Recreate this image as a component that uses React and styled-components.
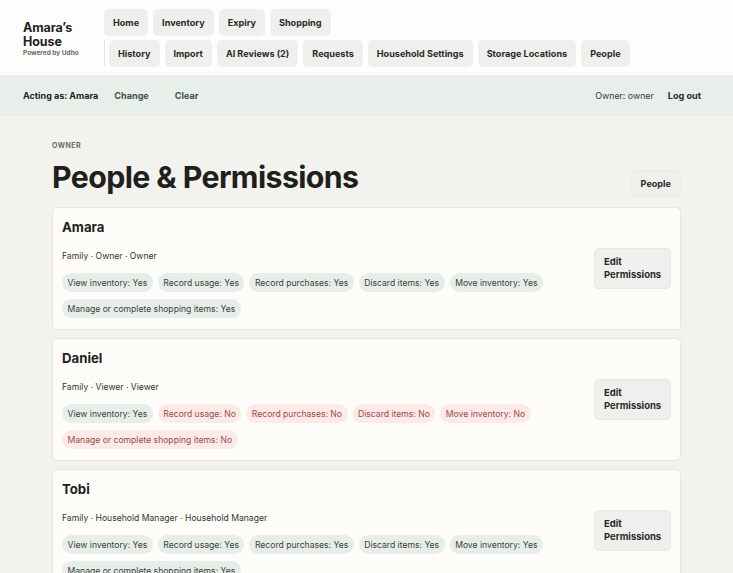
import React from 'react';
import styled, { createGlobalStyle } from 'styled-components';

const GlobalStyle = createGlobalStyle`
	* { box-sizing: border-box; }
	body {
		margin: 0;
		background: #f4f2ee;
		font-family: Inter, 'Noto Sans', sans-serif;
		color: #1f1f1d;
	}
`;

const Header = styled.header`
	background: #fdfdfb;
	display: flex;
	align-items: center;
	gap: 11px;
	padding: 9px 23px 8px;
`;

const Brand = styled.div`
	width: 70px;
	flex-shrink: 0;
	margin-top: 2px;
`;

const BrandName = styled.div`
	font-size: 12.5px;
	font-weight: 700;
	line-height: 13.5px;
	letter-spacing: -0.1px;
`;

const BrandTag = styled.div`
	font-size: 6.5px;
	font-weight: 700;
	color: #6b6b66;
	margin-top: 1px;
`;

const Nav = styled.nav`
	display: flex;
	flex-wrap: wrap;
	gap: 4px 5px;
`;

const NavGroup = styled.div`
	display: flex;
	gap: 5px;
	${p => p.split && `
		border-left: 1px solid #e4e4df;
		padding-left: 4px;
	`}
`;

const NavButton = styled.button`
	height: 27px;
	padding: 0 9px;
	border: none;
	border-radius: 5px;
	background: #eff0ed;
	font-family: inherit;
	font-size: 9.1px;
	font-weight: 700;
	color: #2a2a28;
`;

const SubBar = styled.div`
	background: #e8eee9;
	height: 41px;
	display: flex;
	align-items: center;
	justify-content: space-between;
	padding: 0 22px 0 23px;
	font-size: 8.8px;
`;

const BarGroup = styled.div`
	display: flex;
	align-items: center;
	gap: ${p => p.gap || 0}px;
`;

const Acting = styled.span`
	font-size: 9px;
	font-weight: 700;
`;

const OwnerNote = styled.span`
	color: #3b3b38;
`;

const LinkButton = styled.button`
	background: none;
	border: none;
	padding: 4px 10px;
	font-family: inherit;
	font-size: 9.1px;
	font-weight: 700;
	color: ${p => (p.muted ? '#3d5646' : '#2a2a28')};
`;

const Main = styled.main`
	padding: 25px 52px 0;
`;

const Eyebrow = styled.div`
	font-size: 7px;
	font-weight: 700;
	letter-spacing: 0.5px;
	color: #6b6b66;
	text-transform: uppercase;
`;

const TitleRow = styled.div`
	display: flex;
	justify-content: space-between;
	align-items: flex-end;
	margin-top: 8px;
	margin-bottom: 11px;
`;

const Title = styled.h1`
	margin: 0;
	font-size: 30.3px;
	font-weight: 700;
	letter-spacing: -0.6px;
	line-height: 38px;
`;

const GhostButton = styled.button`
	height: 27px;
	padding: 0 9px;
	border: 1px solid #ecebe6;
	border-radius: 5px;
	background: #eff0ed;
	font-family: inherit;
	font-size: 9.1px;
	font-weight: 700;
	color: #2a2a28;
	margin-bottom: -1px;
`;

const List = styled.div`
	display: flex;
	flex-direction: column;
	gap: 8px;
`;

const Card = styled.section`
	background: #fdfcf9;
	border: 1px solid #e7e5df;
	border-radius: 5px;
	padding: 10px 9px 11px;
	display: flex;
	align-items: center;
	gap: 12px;
`;

const CardBody = styled.div`
	flex: 1;
`;

const Name = styled.h2`
	margin: 0;
	font-size: 13.2px;
	font-weight: 700;
	line-height: 18px;
`;

const Meta = styled.div`
	font-size: 8.6px;
	color: #34342f;
	margin: 15px 0 12px;
`;

const Chips = styled.div`
	display: flex;
	flex-wrap: wrap;
	gap: 7px 5px;
`;

const Chip = styled.span`
	display: inline-flex;
	align-items: center;
	height: 19px;
	padding: 0 5.5px;
	border-radius: 10px;
	font-size: 8.6px;
	background: ${p => (p.on ? '#e7eee9' : '#fbeae7')};
	color: ${p => (p.on ? '#3a3e3a' : '#a0494a')};
`;

const EditButton = styled.button`
	width: 77px;
	height: 41px;
	flex-shrink: 0;
	padding: 0 9px;
	border: 1px solid #e8e9e5;
	border-radius: 5px;
	background: #eff0ed;
	font-family: inherit;
	font-size: 9.5px;
	font-weight: 700;
	line-height: 13.5px;
	text-align: left;
	color: #2a2a28;
`;

const permissionLabels = [
	'View inventory',
	'Record usage',
	'Record purchases',
	'Discard items',
	'Move inventory',
	'Manage or complete shopping items',
];

const people = [
	{ name: 'Amara', meta: 'Family · Owner · Owner', perms: [1, 1, 1, 1, 1, 1] },
	{ name: 'Daniel', meta: 'Family · Viewer · Viewer', perms: [1, 0, 0, 0, 0, 0] },
	{ name: 'Tobi', meta: 'Family · Household Manager · Household Manager', perms: [1, 1, 1, 1, 1, 1] },
];

const topNav = ['Home', 'Inventory', 'Expiry', 'Shopping'];
const moreNav = ['History', 'Import', 'AI Reviews (2)', 'Requests', 'Household Settings', 'Storage Locations', 'People'];

const App = () => (
	<>
		<GlobalStyle />
		<Header>
			<Brand>
				<BrandName>Amara’s House</BrandName>
				<BrandTag>Powered by Udho</BrandTag>
			</Brand>
			<Nav>
				<NavGroup>
					{topNav.map(item => <NavButton key={item}>{item}</NavButton>)}
				</NavGroup>
				<NavGroup split>
					{moreNav.map(item => <NavButton key={item}>{item}</NavButton>)}
				</NavGroup>
			</Nav>
		</Header>
		<SubBar>
			<BarGroup gap={6}>
				<Acting>Acting as: Amara</Acting>
				<LinkButton muted>Change</LinkButton>
				<LinkButton muted>Clear</LinkButton>
			</BarGroup>
			<BarGroup gap={4}>
				<OwnerNote>Owner: owner</OwnerNote>
				<LinkButton>Log out</LinkButton>
			</BarGroup>
		</SubBar>
		<Main>
			<Eyebrow>Owner</Eyebrow>
			<TitleRow>
				<Title>People &amp; Permissions</Title>
				<GhostButton>People</GhostButton>
			</TitleRow>
			<List>
				{people.map(person => (
					<Card key={person.name}>
						<CardBody>
							<Name>{person.name}</Name>
							<Meta>{person.meta}</Meta>
							<Chips>
								{permissionLabels.map((label, i) => (
									<Chip key={label} on={person.perms[i]}>
										{label}: {person.perms[i] ? 'Yes' : 'No'}
									</Chip>
								))}
							</Chips>
						</CardBody>
						<EditButton>Edit Permissions</EditButton>
					</Card>
				))}
			</List>
		</Main>
	</>
);

export default App;
